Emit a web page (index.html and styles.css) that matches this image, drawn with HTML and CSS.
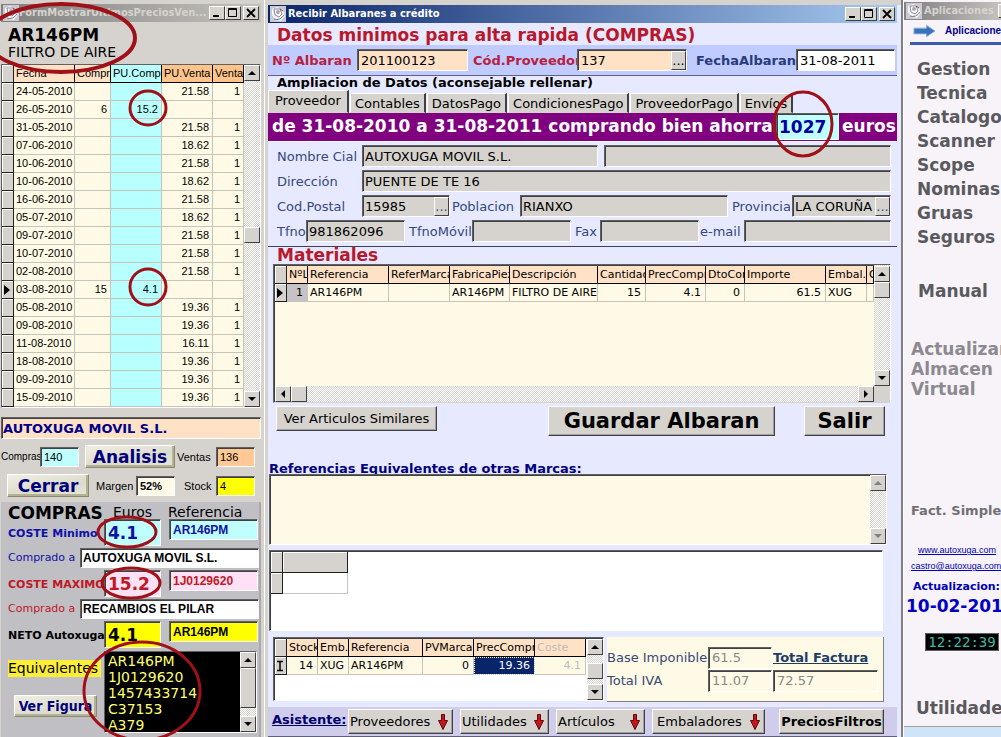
FILE: index.html
```html
<!DOCTYPE html>
<html lang="es">
<head>
<meta charset="utf-8">
<title>Recibir Albaranes a crédito</title>
<link rel="stylesheet" href="styles.css">
</head>
<body>
<svg class="defs" aria-hidden="true">
  <symbol id="app" viewBox="0 0 16 16"><rect width="16" height="16" fill="#c9c9d2"/><path d="M2 3l5-2 6 3 2 6-4 5-6-1-3-5z" fill="#f4f4f8"/><path d="M4 3l6 0 2 5-3 3-4-2z" fill="#fff" stroke="#8b8b99"/><circle cx="8" cy="6" r="2" fill="#aaa8b8"/><path d="M4 13q6 2 10-4" fill="none" stroke="#777786"/><path d="M10 3l3 2" stroke="#a33" /></symbol>
  <symbol id="min" viewBox="0 0 14 12"><path d="M3 9h6" stroke="#000" stroke-width="2"/></symbol>
  <symbol id="max" viewBox="0 0 14 12"><path d="M2.500 1.500h8v8h-8zM2 2.500h9" fill="none" stroke="#000"/></symbol>
  <symbol id="cls" viewBox="0 0 14 12"><path d="M3 2l8 8m0-8l-8 8" stroke="#000" stroke-width="1.800"/></symbol>
  <symbol id="up" viewBox="0 0 14 14"><path d="M7 5l4 4H3z"/></symbol>
  <symbol id="down" viewBox="0 0 14 14"><path d="M7 9L3 5h8z"/></symbol>
  <symbol id="left" viewBox="0 0 14 14"><path d="M5 7l4-4v8z"/></symbol>
  <symbol id="right" viewBox="0 0 14 14"><path d="M9 7L5 3v8z"/></symbol>
  <symbol id="row" viewBox="0 0 8 12"><path d="M1 1l6 5-6 5z"/></symbol>
  <symbol id="red" viewBox="0 0 10 16"><path d="M3.500 .5h3v6h3L5 15.500.5 6.500h3z" fill="#c8141c" stroke="#5a0a0e"/></symbol>
</svg>

<section class="win prices">
  <header class="bar inactive">
    <svg class="ico"><use href="#app"/></svg><span class="cap">FormMostrarUltimosPreciosVen...</span>
    <button class="wb" aria-label="Minimizar"><svg><use href="#min"/></svg></button><button class="wb" aria-label="Maximizar"><svg><use href="#max"/></svg></button><button class="wb close" aria-label="Cerrar ventana"><svg><use href="#cls"/></svg></button>
  </header>
  <div class="article"><strong>AR146PM</strong><span>FILTRO DE AIRE</span></div>
  <div class="sunk history">
    <table class="grid">
      <colgroup><col class="c-sel"><col><col class="c36"><col class="c51"><col class="c51"><col class="c31"></colgroup>
      <thead><tr><th class="sel"></th><th>Fecha</th><th>Compra</th><th class="cy">PU.Compra</th><th class="or">PU.Venta</th><th class="or">Ventas</th></tr></thead>
      <tbody>
      <tr><td class="sel"></td><td>24-05-2010</td><td></td><td class="cy"></td><td>21.58</td><td>1</td></tr>
      <tr><td class="sel"></td><td>26-05-2010</td><td>6</td><td class="cy">15.2</td><td></td><td></td></tr>
      <tr><td class="sel"></td><td>31-05-2010</td><td></td><td class="cy"></td><td>21.58</td><td>1</td></tr>
      <tr><td class="sel"></td><td>07-06-2010</td><td></td><td class="cy"></td><td>18.62</td><td>1</td></tr>
      <tr><td class="sel"></td><td>10-06-2010</td><td></td><td class="cy"></td><td>21.58</td><td>1</td></tr>
      <tr><td class="sel"></td><td>10-06-2010</td><td></td><td class="cy"></td><td>18.62</td><td>1</td></tr>
      <tr><td class="sel"></td><td>16-06-2010</td><td></td><td class="cy"></td><td>21.58</td><td>1</td></tr>
      <tr><td class="sel"></td><td>05-07-2010</td><td></td><td class="cy"></td><td>18.62</td><td>1</td></tr>
      <tr><td class="sel"></td><td>09-07-2010</td><td></td><td class="cy"></td><td>21.58</td><td>1</td></tr>
      <tr><td class="sel"></td><td>10-07-2010</td><td></td><td class="cy"></td><td>21.58</td><td>1</td></tr>
      <tr><td class="sel"></td><td>02-08-2010</td><td></td><td class="cy"></td><td>21.58</td><td>1</td></tr>
      <tr><td class="sel"><svg class="mark"><use href="#row"/></svg></td><td>03-08-2010</td><td>15</td><td class="cy">4.1</td><td></td><td></td></tr>
      <tr><td class="sel"></td><td>05-08-2010</td><td></td><td class="cy"></td><td>19.36</td><td>1</td></tr>
      <tr><td class="sel"></td><td>09-08-2010</td><td></td><td class="cy"></td><td>19.36</td><td>1</td></tr>
      <tr><td class="sel"></td><td>11-08-2010</td><td></td><td class="cy"></td><td>16.11</td><td>1</td></tr>
      <tr><td class="sel"></td><td>18-08-2010</td><td></td><td class="cy"></td><td>19.36</td><td>1</td></tr>
      <tr><td class="sel"></td><td>09-09-2010</td><td></td><td class="cy"></td><td>19.36</td><td>1</td></tr>
      <tr><td class="sel"></td><td>15-09-2010</td><td></td><td class="cy"></td><td>19.36</td><td>1</td></tr>
      </tbody>
    </table>
    <div class="vscroll"><button class="sb" aria-label="Subir"><svg><use href="#up"/></svg></button><i class="gap-a"></i><i class="thumb"></i><i class="gap-b"></i><button class="sb" aria-label="Bajar"><svg><use href="#down"/></svg></button></div>
  </div>
  <input class="in supplier" aria-label="Proveedor" value="AUTOXUGA MOVIL S.L.">
  <div class="stats one">
    <label for="compras" class="tight">Compras</label><input id="compras" class="in cyan" value="140">
    <button class="stone big">Analisis</button>
    <label for="ventas">Ventas</label><input id="ventas" class="in orange" value="136">
  </div>
  <div class="stats two">
    <button class="stone big">Cerrar</button>
    <label for="margen">Margen</label><input id="margen" class="in cream bold" value="52%">
    <label for="stock">Stock</label><input id="stock" class="in yellow" value="4">
  </div>
  <div class="costs">
    <div class="chead"><h2>COMPRAS</h2><span>Euros</span><span>Referencia</span></div>
    <div class="cost blue"><label for="cmin">COSTE Minimo</label><input id="cmin" class="in cyan large" value="4.1"><input class="in cyan ref" aria-label="Referencia coste mínimo" value="AR146PM"></div>
    <div class="from blue"><label for="f1">Comprado a</label><input id="f1" class="in" value="AUTOXUGA MOVIL S.L."></div>
    <div class="cost redt"><label for="cmax">COSTE MAXIMO</label><input id="cmax" class="in pink large" value="15.2"><input class="in pink ref" aria-label="Referencia coste máximo" value="1J0129620"></div>
    <div class="from redt"><label for="f2">Comprado a</label><input id="f2" class="in" value="RECAMBIOS EL PILAR"></div>
    <div class="cost"><label for="neto">NETO Autoxuga</label><input id="neto" class="in yellow large" value="4.1"><input class="in yellow ref" aria-label="Referencia neto" value="AR146PM"></div>
    <div class="equiv">
      <div class="eqside"><label for="eq">Equivalentes</label><button class="stone">Ver Figura</button></div>
      <div class="sunk eqlist">
        <select id="eq" multiple size="5"><option>AR146PM</option><option>1J0129620</option><option>1457433714</option><option>C37153</option><option>A379</option></select>
        <div class="vscroll"><button class="sb" aria-label="Subir"><svg><use href="#up"/></svg></button><i class="thumb tall"></i><i class="gap-b"></i><button class="sb" aria-label="Bajar"><svg><use href="#down"/></svg></button></div>
      </div>
    </div>
  </div>
  <svg class="rings" viewBox="0 0 265 737" aria-hidden="true"><ellipse cx="61" cy="38" rx="74" ry="34" stroke-width="4"/><ellipse cx="148" cy="108" rx="18" ry="17"/><ellipse cx="148" cy="287" rx="18" ry="18"/><ellipse cx="127" cy="532" rx="29" ry="15"/><ellipse cx="131" cy="583" rx="29" ry="15"/><ellipse cx="142" cy="691" rx="58" ry="49"/></svg>
</section>

<main class="win order">
  <header class="bar active">
    <svg class="ico"><use href="#app"/></svg><span class="cap">Recibir Albaranes a crédito</span>
    <button class="wb" aria-label="Minimizar"><svg><use href="#min"/></svg></button><button class="wb" aria-label="Maximizar"><svg><use href="#max"/></svg></button><button class="wb close" aria-label="Cerrar ventana"><svg><use href="#cls"/></svg></button>
  </header>
  <h1>Datos minimos para alta rapida (COMPRAS)</h1>
  <div class="key">
    <label for="alb">Nº Albaran</label><input id="alb" class="in peach" value="201100123">
    <label for="prov">Cód.Proveedor</label><span class="combo peach"><input id="prov" value="137"><button class="dots" aria-label="Buscar proveedor">...</button></span>
    <label for="fecha" class="navy">FechaAlbaran</label><input id="fecha" class="in" value="31-08-2011">
  </div>
  <h3 class="amp">Ampliacion de Datos (aconsejable rellenar)</h3>
  <div class="tabs" role="tablist"><button role="tab" aria-selected="true">Proveedor</button><button role="tab">Contables</button><button role="tab">DatosPago</button><button role="tab">CondicionesPago</button><button role="tab">ProveedorPago</button><button role="tab">Envíos</button></div>
  <div class="saving"><label for="ahorro">de 31-08-2010 a 31-08-2011 comprando bien ahorra</label><input id="ahorro" class="in cyan" value="1027"><span>euros</span>
    <svg class="ring" viewBox="0 0 64 72" aria-hidden="true"><ellipse cx="32" cy="36" rx="29" ry="32"/></svg></div>
  <div class="data">
    <div class="r1"><label for="nc">Nombre Cial</label><input id="nc" class="in gray" value="AUTOXUGA MOVIL S.L."><input class="in gray" aria-label="Nombre fiscal"></div>
    <div class="r2"><label for="dir">Dirección</label><input id="dir" class="in gray" value="PUENTE DE TE 16"></div>
    <div class="r3"><label for="cp">Cod.Postal</label><span class="combo gray"><input id="cp" value="15985"><button class="dots" aria-label="Buscar código postal">...</button></span><label for="pob">Poblacion</label><input id="pob" class="in gray" value="RIANXO"><label for="pcia">Provincia</label><span class="combo gray"><input id="pcia" value="LA CORUÑA"><button class="dots" aria-label="Buscar provincia">...</button></span></div>
    <div class="r4"><label for="tf">Tfno</label><input id="tf" class="in gray" value="981862096"><label for="mv">TfnoMóvil</label><input id="mv" class="in gray"><label for="fx">Fax</label><input id="fx" class="in gray"><label for="em">e-mail</label><input id="em" class="in gray"></div>
  </div>
  <h2 class="mat">Materiales</h2>
  <div class="sunk items">
    <div class="body">
      <table class="grid verd">
        <colgroup><col class="c-sel"><col class="c21"><col class="c81"><col class="c61"><col class="c60"><col><col class="c48"><col class="c60"><col class="c39"><col class="c81"><col class="c41"><col class="c7"></colgroup>
        <thead><tr><th class="sel"></th><th>NºL</th><th>Referencia</th><th>ReferMarca</th><th>FabricaPieza</th><th>Descripción</th><th>Cantidad</th><th>PrecCompra</th><th>DtoCompra</th><th>Importe</th><th>Embal.</th><th>C</th></tr></thead>
        <tbody><tr><td class="sel"><svg class="mark"><use href="#row"/></svg></td><td class="num fix">1</td><td>AR146PM</td><td></td><td>AR146PM</td><td>FILTRO DE AIRE</td><td class="num">15</td><td class="num">4.1</td><td class="num">0</td><td class="num">61.5</td><td>XUG</td><td></td></tr></tbody>
      </table>
      <div class="hscroll"><button class="sb" aria-label="Izquierda"><svg><use href="#left"/></svg></button><i class="thumb"></i><i class="gap-b"></i><button class="sb" aria-label="Derecha"><svg><use href="#right"/></svg></button></div>
    </div>
    <div class="vscroll corner"><button class="sb" aria-label="Subir"><svg><use href="#up"/></svg></button><i class="thumb"></i><i class="gap-b"></i><button class="sb" aria-label="Bajar"><svg><use href="#down"/></svg></button></div>
  </div>
  <div class="actions"><button class="btn">Ver Articulos Similares</button><button class="btn save">Guardar Albaran</button><button class="btn exit">Salir</button></div>
  <h3 class="refs"><label for="otras">Referencias Equivalentes de otras Marcas:</label></h3>
  <div class="sunk memo"><textarea id="otras"></textarea><div class="vscroll dim"><button class="sb" aria-label="Subir"><svg><use href="#up"/></svg></button><i class="gap-b"></i><button class="sb" aria-label="Bajar"><svg><use href="#down"/></svg></button></div></div>
  <div class="sunk blank"><table class="grid"><colgroup><col class="c-sel"><col class="c65"></colgroup><tr><th class="sel"></th><th class="sel"></th></tr><tr><td class="sel"></td><td></td></tr></table></div>
  <div class="foot">
    <div class="sunk stock">
      <table class="grid verd">
        <colgroup><col class="c-sel"><col class="c31"><col class="c31"><col><col class="c51"><col class="c61"><col class="c51"></colgroup>
        <thead><tr><th class="sel"></th><th>Stock</th><th>Emb.</th><th>Referencia</th><th>PVMarca</th><th>PrecCompra</th><th class="faint">Coste</th></tr></thead>
        <tbody><tr><td class="sel"><svg class="mark" viewBox="0 0 8 12"><path d="M1 1.500h6M1 10.500h6M4 1v10" stroke="#000" stroke-width="1.500"/></svg></td><td class="num">14</td><td>XUG</td><td>AR146PM</td><td class="num">0</td><td class="num pick">19.36</td><td class="num faint">4.1</td></tr></tbody>
      </table>
      <div class="vscroll"><button class="sb" aria-label="Subir"><svg><use href="#up"/></svg></button><i class="gap-c"></i><i class="thumb"></i><i class="gap-b"></i><button class="sb" aria-label="Bajar"><svg><use href="#down"/></svg></button></div>
    </div>
    <div class="totals"><label for="bi">Base Imponible</label><input id="bi" class="in" value="61.5"><label for="ttf" class="tf">Total Factura</label><label for="iva">Total IVA</label><input id="iva" class="in" value="11.07"><input id="ttf" class="in" value="72.57"></div>
  </div>
  <div class="assist"><strong>Asistente:</strong><button class="btn">Proveedores<svg><use href="#red"/></svg></button><button class="btn b2">Utilidades<svg><use href="#red"/></svg></button><button class="btn b2">Artículos<svg><use href="#red"/></svg></button><button class="btn b3">Embaladores<svg><use href="#red"/></svg></button><button class="btn b4">PreciosFiltros</button></div>
</main>

<aside class="win apps">
  <header class="bar inactive"><svg class="ico"><use href="#app"/></svg><span class="cap">Aplicaciones</span><button class="wb" aria-label="Minimizar"><svg><use href="#min"/></svg></button></header>
  <div class="apphead"><svg viewBox="0 0 24 14"><path d="M1 4h13V1l9 6-9 6v-3H1z" fill="#3a72ba" stroke="#8fb4e0"/></svg><b>Aplicaciones</b></div>
  <nav>
    <ul class="menu"><li>Gestion</li><li>Tecnica</li><li>Catalogo</li><li>Scanner</li><li>Scope</li><li>Nominas</li><li>Gruas</li><li>Seguros</li></ul>
    <p class="manual">Manual</p>
    <p class="virtual">Actualizar<br>Almacen<br>Virtual</p>
    <p class="simple">Fact. Simple</p>
  </nav>
  <div class="contact"><a href="#web">www.autoxuga.com</a><a href="#mail">castro@autoxuga.com</a></div>
  <p class="upd">Actualizacion:</p>
  <p class="date">10-02-2011</p>
  <time class="clock">12:22:39</time>
  <p class="utils">Utilidades</p>
  <div class="task"></div>
</aside>
</body>
</html>
```
FILE: styles.css
```css
* { box-sizing: border-box; }
body {
  margin: 0;
  min-height: 100vh;
  display: grid;
  grid-template-columns: 265px minmax(0, 1fr) 98px;
  overflow-x: hidden;
  background: #d6d3ce;
  color: #000;
  font: 11px/14px "Liberation Sans", Arial, sans-serif;
}
h1, h2, h3, p, ul { margin: 0; padding: 0; list-style: none; }
button, input, select, textarea { font: inherit; color: inherit; margin: 0; border-radius: 0; min-width: 0; }
.defs { position: absolute; width: 0; height: 0; }
.win { position: relative; display: flex; flex-direction: column; min-width: 0; }

/* title bars */
.bar { display: flex; align-items: center; height: 18px; flex: none; padding-right: 2px; overflow: hidden; font: bold 11px/18px "DejaVu Sans Condensed", "Noto Sans", sans-serif; }
.inactive { background: linear-gradient(90deg, #808080, #c4c2be); color: #d6d3ce; }
.active { background: linear-gradient(90deg, #0a246a, #a6caf0); color: #fff; }
.ico { width: 16px; height: 16px; flex: none; margin: 0 2px; }
.cap { flex: 1; min-width: 0; overflow: hidden; white-space: nowrap; }
.wb { width: 16px; height: 14px; padding: 0; flex: none; background: #d6d3ce; border: 1px solid; border-color: #fff #404040 #404040 #fff; display: flex; }
.wb svg { width: 14px; height: 12px; flex: none; }
.close { margin-left: 2px; }
.prices .ico { margin-right: 0; }

/* fields */
.in, .combo, .sunk { border: 1px solid; border-color: #606060 #fff #fff #606060; box-shadow: inset 1px 1px 0 #404040; }
.in { background: #fff; padding: 0 3px; height: 22px; width: 100%; }
.combo { display: flex; height: 22px; min-width: 0; padding: 1px 0 0 1px; }
.combo input { flex: 1; width: 0; border: 0; background: transparent; padding: 0 2px; }
.dots { width: 15px; flex: none; padding: 0; border: 1px solid; border-color: #fff #404040 #404040 #fff; background: #d6d3ce; line-height: 10px; }
.cyan { background: #c0ffff; }
.orange { background: #ffc894; }
.cream { background: #fffae8; }
.yellow { background: #ff0; }
.pink { background: #ffe0f4; }
.peach { background: #ffe2c6; }
.gray { background: #d6d3ce; }
.bold { font-weight: bold; }

/* scroll bars */
.vscroll, .hscroll { display: flex; flex: none; background: repeating-conic-gradient(#fff 0 25%, #d6d3ce 0 50%) 0 0 / 2px 2px; }
.vscroll { flex-direction: column; width: 16px; }
.hscroll { height: 16px; }
.sb, .thumb { width: 16px; height: 16px; flex: none; padding: 0; background: #d6d3ce; border: 1px solid; border-color: #fff #404040 #404040 #fff; display: flex; }
.sb svg { width: 14px; height: 14px; }
.gap-b { flex: 1; }
.gap-c { flex: none; height: 8px; }
.dim svg { fill: #808080; }

/* data grids */
.sunk { display: flex; background: #fffae6; }
.grid { flex: 1; width: 100%; table-layout: fixed; border-collapse: separate; border-spacing: 0; align-self: flex-start; }
.grid th, .grid td { height: 18px; padding: 0 2px; line-height: 17px; overflow: hidden; white-space: nowrap; text-align: left; font-weight: normal; border: 0 solid #c6c3bd; border-width: 0 1px 1px 0; }
.grid th { background: #ffe2c6; border-color: #000; }
.grid .sel { background: #d6d3ce; border-color: #202020; box-shadow: inset 1px 1px 0 #fff; padding: 0 1px; }
.grid .cy { background: #b8ffff; }
.grid .or { background: #ffc48c; }
.grid .num { text-align: right; padding-right: 4px; }
.grid .fix { background: #c6c3c6; }
.grid .faint { color: #c0bcb4; }
.grid .pick { background: #0a246a; color: #fff; outline: 1px dotted #fff; outline-offset: -1px; }
.mark { display: block; width: 8px; height: 12px; }
.verd { font: 11px/14px "DejaVu Sans", Verdana, sans-serif; }
.c-sel { width: 12px; } .c7 { width: 7px; } .c21 { width: 21px; } .c31 { width: 31px; } .c36 { width: 36px; } .c39 { width: 39px; }
.c41 { width: 41px; } .c48 { width: 48px; } .c51 { width: 51px; } .c60 { width: 60px; } .c61 { width: 61px; } .c65 { width: 65px; } .c81 { width: 81px; }

/* price history window */
.prices { padding: 4px 3px 0 1px; border-right: 1px solid #fff; }
.article { height: 42px; padding: 4px 7px 0; font-family: "DejaVu Sans", Verdana, sans-serif; display: flex; flex-direction: column; }
.article strong { font-size: 17px; line-height: 18px; }
.article span { font-size: 14px; line-height: 16px; }
.history td:nth-child(n+3) { text-align: right; padding-right: 3px; }
.history { flex: none; }
.gap-a { flex: none; height: 146px; }
.supplier { background: #ffe2c6; margin-top: 9px; flex: none; color: #00008b; font: bold 13px "DejaVu Sans", Verdana, sans-serif; padding: 0 1px; }
.stats { display: flex; align-items: center; height: 25px; }
.stats label { white-space: nowrap; overflow: hidden; flex: none; }
.stats .in { width: 39px; height: 20px; flex: none; }
.one { margin-top: 5px; }
.one label { width: 39px; }
.one .tight { font-size: 10px; }
.one .stone { width: 90px; margin: 0 2px 0 6px; flex: none; }
.two { margin: 4px 0 4px 6px; }
.two .stone { width: 82px; margin-right: 7px; flex: none; }
.two label { width: 40px; }
.two label:last-of-type { width: 32px; margin-left: 9px; }
.stone { border: 1px solid; border-color: #fff #8c8a6c #8c8a6c #fff; box-shadow: inset -2px -2px 0 #b4b294; background: linear-gradient(170deg, #efeee2, #dddbcc 60%, #e8e6da); color: #00007c; font: bold 14px/18px "DejaVu Sans Condensed", "Noto Sans", sans-serif; padding: 0; }
.stone.big { font: bold 17px/20px "DejaVu Sans", Verdana, sans-serif; height: 23px; }
.costs { flex: 1; background: #c0bfc4; border-right: 2px solid #aaa8ac; padding: 1px 0 2px 7px; font: 11px/14px "DejaVu Sans", Verdana, sans-serif; }
.chead { display: grid; grid-template-columns: 105px 55px 1fr; height: 16px; white-space: nowrap; font-size: 14px; }
.chead h2 { font-size: 17px; line-height: 20px; }
.chead span { line-height: 19px; }
.cost { display: grid; grid-template-columns: 96px 57px 89px; height: 27px; }
.cost label { font-weight: bold; white-space: nowrap; overflow: hidden; padding-top: 8px; font-size: 11px; }
.cost .large { height: 27px; font: bold 17px "DejaVu Sans", Verdana, sans-serif; }
.cost .ref { margin-left: 8px; height: 21px; font: bold 12px "Liberation Sans", Arial, sans-serif; }
.from { display: grid; grid-template-columns: 72px 1fr; align-items: center; height: 24px; white-space: nowrap; }
.from .in { height: 20px; font: bold 12px "Liberation Sans", Arial, sans-serif; color: #000; padding: 0 2px; }
.blue { color: #1010a8; }
.redt { color: #c01824; }
.equiv { display: grid; grid-template-columns: 96px 153px; margin-top: 3px; }
.eqside { display: flex; flex-direction: column; align-items: flex-start; }
.eqside label { background: #ffee38; font-size: 14px; line-height: 17px; margin-top: 9px; width: 93px; overflow: hidden; }
.eqside .stone { width: 83px; height: 22px; margin: 18px 0 0 6px; }
.eqlist { height: 82px; background: #000; }
.eqlist select { flex: 1; border: 0; background: #000; color: #ffff70; padding: 1px 0 0 2px; overflow: hidden; outline: 0; font: 14px/16px "DejaVu Sans", Verdana, sans-serif; height: 80px; }
.eqlist option { padding: 0 1px; min-height: 16px; height: 16px; line-height: 16px; color: #ffff70; }
.eqlist .tall { height: 40px; }
.rings, .ring { position: absolute; fill: none; stroke: #a01018; stroke-width: 3px; pointer-events: none; }
.rings { left: 0; top: 0; width: 265px; height: 737px; }

/* delivery note window */
.order { padding: 5px 4px 1px 3px; background: #e6e9ff; border-right: 2px solid #808080; box-shadow: inset 3px 5px 0 #d6d3ce; font: 13px/15px "DejaVu Sans", Verdana, sans-serif; }
.order > * { flex: none; }
h1 { font-size: 17px; line-height: 22px; color: #b8182a; padding: 1px 9px 0; height: 22px; white-space: nowrap; }
.key { display: grid; grid-template-columns: 85px 111px 109px minmax(0, 1fr) 109px 99px; align-items: center; height: 31px; padding: 0 2px 0 4px; background: #c0ccff; border-bottom: 1px solid #606088; }
.key label { font-weight: bold; color: #b82040; white-space: nowrap; overflow: hidden; }
.key label:nth-of-type(2) { margin-left: 5px; }
.key .navy { color: #283c7c; margin-left: 9px; }
.amp { font-size: 13px; line-height: 14px; height: 13px; padding-left: 9px; overflow: hidden; white-space: nowrap; }
.tabs { display: flex; align-items: flex-end; height: 24px; gap: 1px; }
.tabs button { height: 20px; padding: 0 4px; border: 1px solid; border-color: #fff #404040 #d6d3ce #fff; border-right-width: 2px; background: #d6d3ce; line-height: 17px; }
.tabs button:first-child { height: 23px; padding: 0 6px 3px; }
.saving { position: relative; display: grid; grid-template-columns: 1fr 63px 58px; height: 29px; background: #800080; color: #fff; font: bold 17px/26px "DejaVu Sans", Verdana, sans-serif; border-bottom: 1px solid #fff; }
.saving label { padding-left: 4px; white-space: nowrap; overflow: hidden; }
.saving .in { height: 27px; color: #00009c; padding: 0 2px; }
.saving span { padding-left: 3px; }
.ring { right: 62px; top: -25px; width: 64px; height: 72px; }
.data { display: grid; gap: 3px; padding: 3px 6px 4px 9px; border-bottom: 1px solid #404050; color: #34487c; }
.data > div { display: grid; align-items: center; }
.data input { color: #000; }
.data .in { padding: 0 2px; }
.data .combo input { padding: 0 1px; }
.data label { white-space: nowrap; }
.r1 { grid-template-columns: 85px 236px 1fr; }
.r1 .in:last-child { margin-left: 6px; width: auto; }
.r2 { grid-template-columns: 85px 1fr; }
.r3 { grid-template-columns: 85px 88px 70px 1fr 64px 99px; }
.r3 label:nth-of-type(2) { padding-left: 2px; }
.r3 label:nth-of-type(3) { padding-left: 4px; }
.r4 { grid-template-columns: 29px 99px 67px 99px 29px 99px 45px 1fr; }
.r4 label:nth-of-type(2), .r4 label:nth-of-type(3) { padding-left: 4px; }
.r4 label:nth-of-type(4) { padding-left: 1px; }
.mat { font-size: 17px; line-height: 17px; color: #b8182a; padding-left: 9px; }
.items { height: 139px; margin: 0 6px 0 5px; border-bottom-color: #d6d3ce; }
.items .body { flex: 1; display: flex; flex-direction: column; justify-content: space-between; min-width: 0; padding: 1px 0 0 1px; }
.items .grid { flex: none; }
.corner { border-bottom: 16px solid #d6d3ce; padding-top: 1px; }
.btn { background: #d6d3ce; border: 1px solid; border-color: #fff #404040 #404040 #fff; box-shadow: inset -1px -1px 0 #a0a0a0; padding: 0; white-space: nowrap; }
.actions { display: grid; grid-template-columns: 161px 1fr 81px; column-gap: 29px; align-items: start; padding: 3px 12px 0 8px; }
.actions .btn { height: 25px; }
.actions .save { margin-left: auto; width: 227px; }
.actions .save, .actions .exit { height: 30px; font-size: 21px; font-weight: bold; }
.refs { font-size: 13px; line-height: 15px; margin-top: 25px; color: #000080; height: 13px; padding-left: 1px; white-space: nowrap; }
.memo { margin: 0 10px 0 1px; height: 71px; }
.memo textarea { flex: 1; border: 0; background: transparent; resize: none; }
.blank { margin: 5px 14px 0 1px; height: 81px; background: #fff; padding: 1px; }
.blank .grid { flex: none; width: 77px; }
.blank .grid th, .blank .grid td { height: 21px; }
.foot { display: grid; grid-template-columns: 331px 1fr; gap: 3px; margin: 6px 13px 0 5px; }
.stock { height: 64px; background: #fff; padding: 1px 0 0 1px; }
.stock td { background: #fffae6; }
.stock .vscroll { margin-left: 1px; }
.totals { display: grid; grid-template-columns: 100px 64px 1fr; align-content: center; align-items: center; gap: 1px; background: #fffae6; border-right: 1px solid #808080; border-bottom: 1px solid #808080; padding: 0 5px 0 0; color: #384878; height: 65px; }
.totals .in { background: #fffae6; color: #888; }
.totals .tf { font-weight: bold; text-decoration: underline; color: #203c64; }
.totals label { white-space: nowrap; }
.assist { display: flex; align-items: flex-start; gap: 7px; margin-top: 5px; padding: 2px 13px 0 4px; height: 30px; background: #d0ccec; border-bottom: 1px solid #606078; }
.assist strong { width: 69px; line-height: 22px; text-decoration: underline; color: #00006c; white-space: nowrap; }
.assist .btn { width: 105px; height: 25px; display: flex; align-items: center; justify-content: space-between; padding: 0 4px 0 1px; }
.assist .btn svg { width: 10px; height: 16px; }
.assist .b2 { width: 89px; }
.assist .b3 { width: 113px; padding-left: 4px; }
.assist .b4 { margin-left: auto; justify-content: center; font-weight: bold; padding: 0; }

/* applications window */
.apps { background: #f7f3f9; padding-top: 2px; border-left: 1px solid #fff; font-family: "DejaVu Sans", Verdana, sans-serif; font-weight: bold; color: #5a5a5e; overflow: hidden; white-space: nowrap; }
.apps .cap { flex: none; width: 74px; }
.apphead { display: flex; align-items: center; margin-left: 6px; padding-left: 3px; height: 25px; border-bottom: 3px solid #3c5cb0; color: #00008c; font: bold 10px/20px "Liberation Sans", Arial, sans-serif; gap: 9px; flex: none; }
.apphead svg { width: 23px; height: 14px; flex: none; }
.menu { font-size: 17px; line-height: 24px; margin: 12px 0 0 13px; }
.manual { font-size: 17px; line-height: 24px; margin: 30px 0 0 14px; }
.virtual { font-size: 17px; line-height: 20px; margin: 36px 0 0 7px; color: #8c8a90; }
.simple { font-size: 13px; line-height: 16px; margin: 104px 0 0 7px; color: #707074; }
.contact { display: flex; flex-direction: column; margin-top: 23px; padding-left: 7px; font: 9px/16px "Liberation Sans", Arial, sans-serif; }
.contact a { color: #0000b4; }
.contact a:first-child { padding-left: 7px; }
.upd { font-size: 11px; line-height: 16px; margin: 5px 0 0 9px; color: #0000b4; }
.date { font-size: 17px; line-height: 22px; margin-left: 2px; color: #0000c4; }
.clock { align-self: flex-start; margin: 16px 0 0 21px; width: 74px; height: 18px; border: 1px solid #606060; background: #000; color: #40b8a8; text-align: center; font: 14px/16px "DejaVu Sans Mono", monospace; }
.utils { font-size: 17px; line-height: 22px; margin: 46px 0 0 12px; }
.task { margin-top: auto; height: 12px; border-top: 1px solid #a0a0a0; background: #d0e4f8; }
```
